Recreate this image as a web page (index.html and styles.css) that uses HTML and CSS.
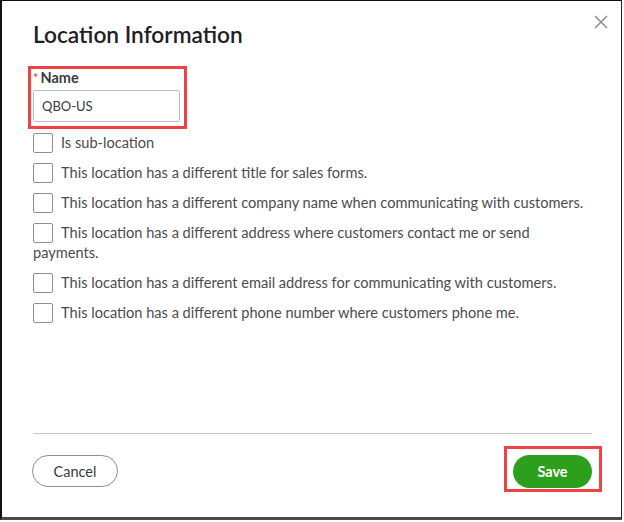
FILE: index.html
```html
<!DOCTYPE html>
<html lang="en">
<head>
<meta charset="utf-8">
<title>Location Information</title>
<link rel="stylesheet" href="styles.css">
</head>
<body>
<div class="window">
  <div class="dialog">
    <div class="header">
      <h1 class="title">Location Information</h1>
      <button class="close" aria-label="Close">
        <svg width="14" height="14" viewBox="0 0 14 14"><path d="M1 1L13 13M13 1L1 13" stroke="#8d9096" stroke-width="1.6" fill="none"/></svg>
      </button>
    </div>
    <div class="body">
      <div class="highlight name-group">
        <label class="label"><span class="req">*</span>Name</label>
        <div class="input">QBO-US</div>
      </div>
      <ul class="options">
        <li class="option"><span class="box"></span>Is sub-location</li>
        <li class="option"><span class="box"></span>This location has a different title for sales forms.</li>
        <li class="option"><span class="box"></span>This location has a different company name when communicating with customers.</li>
        <li class="option"><span class="box"></span>This location has a different address where customers contact me or send payments.</li>
        <li class="option"><span class="box"></span>This location has a different email address for communicating with customers.</li>
        <li class="option"><span class="box"></span>This location has a different phone number where customers phone me.</li>
      </ul>
    </div>
    <div class="footer">
      <button class="btn btn-cancel">Cancel</button>
      <span class="highlight save-wrap"><button class="btn btn-save">Save</button></span>
    </div>
  </div>
</div>
</body>
</html>
```

FILE: styles.css
```css
* { box-sizing: border-box; }
html, body { margin: 0; padding: 0; background: #fff; }
body { font-family: "Lato", "Open Sans", sans-serif; color: #393a3d; }

.window {
  width: 622px;
  height: 520px;
  border-left: 2px solid #111;
  border-top: 1px solid #111;
  border-right: 1px solid #222;
  border-bottom: 3px solid #4a4a4a;
  background: #fff;
}

.dialog {
  height: 100%;
  display: flex;
  flex-direction: column;
  padding: 0 29px 29px 31px;
}

.header {
  display: flex;
  justify-content: space-between;
  align-items: flex-start;
  padding-top: 19px;
}
.title {
  margin: 0;
  font-size: 22.7px;
  line-height: 30px;
  font-weight: 600;
  color: #1f2024;
}
.close {
  border: 0;
  background: none;
  padding: 0;
  margin: -5px -16px 0 0;
  width: 14px;
  height: 14px;
  cursor: pointer;
}
.close svg { display: block; }

.body { flex: 1; padding-top: 16px; }

.highlight { border: 3px solid #f04245; }

.name-group {
  display: inline-flex;
  flex-direction: column;
  gap: 4px;
  margin-left: -5px;
  padding: 1px 4px 4px 2px;
}
.label {
  font-size: 14.5px;
  line-height: 16px;
  font-weight: 700;
  color: #393a3d;
}
.req { color: #e0393a; font-weight: 400; font-size: 13px; margin-right: 2px; }
.input {
  width: 147px;
  height: 32px;
  border: 1px solid #babec5;
  border-radius: 2px;
  padding: 0 8px;
  font-size: 13px;
  line-height: 30px;
  color: #393a3d;
}

.options { list-style: none; margin: 4px 0 0; padding: 0 6px 0 0; }
.option {
  font-size: 14.6px;
  line-height: 20px;
  color: #4b4c50;
  margin-bottom: 10px;
}
.box {
  display: inline-block;
  vertical-align: top;
  width: 20px;
  height: 20px;
  border: 1px solid #8d9096;
  border-radius: 2px;
  margin-right: 8px;
}

.footer {
  border-top: 1px solid #c8c8c8;
  display: flex;
  justify-content: space-between;
  align-items: flex-start;
  padding-top: 21px;
}
.btn {
  font-family: inherit;
  font-size: 14.5px;
  border-radius: 17px;
  cursor: pointer;
}
.btn-cancel {
  margin-left: -1px;
  width: 86px;
  height: 32px;
  border: 1px solid #8d9096;
  background: #fff;
  color: #393a3d;
}
.save-wrap {
  display: inline-flex;
  padding: 6px 7px 1px 6px;
  margin: -9px -10px -4px -9px;
}
.btn-save {
  width: 79px;
  height: 33px;
  border: 0;
  background: #2ca01c;
  color: #fff;
  font-weight: 700;
}
```
